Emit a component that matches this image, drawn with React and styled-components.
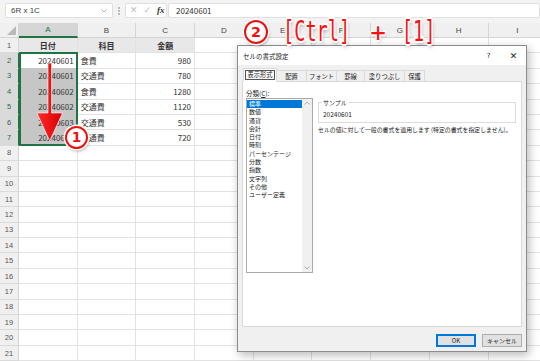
import React from 'react';
import styled, { createGlobalStyle, css } from 'styled-components';

const GREEN = '#217346';
const JP = '"Noto Sans CJK JP", "Noto Sans", sans-serif';

const GlobalStyle = createGlobalStyle`
  html, body {
    margin: 0;
    padding: 0;
    background: #fff;
  }
  body {
    font-family: ${JP};
  }
`;

const Screen = styled.div`
  position: relative;
  width: 540px;
  height: 361px;
  overflow: hidden;
  background: #fff;
`;

/* ---------- formula bar ---------- */

const FormulaBar = styled.div`
  height: 23px;
  box-sizing: border-box;
  padding: 3px 0 0 5px;
  background: #f3f3f3;
  display: flex;
  align-items: flex-start;
  font-size: 8px;
  color: #333;
`;

const Field = styled.div`
  height: 15px;
  box-sizing: border-box;
  background: #fff;
  border: 1px solid #e0e0e0;
  border-radius: 2px;
  display: flex;
  align-items: center;
  width: ${(p) => p.$w || 'auto'};
  flex: ${(p) => (p.$grow ? 1 : 'none')};
  padding: 0 ${(p) => p.$pad || 4}px;
  gap: ${(p) => p.$gap || 0}px;
  margin-left: ${(p) => p.$ml || 0}px;
`;

const NameText = styled.span`
  flex: 1;
  font-family: "Liberation Sans", sans-serif;
  font-size: 8px;
  color: #444;
`;

const Grip = styled.span`
  width: 12px;
  height: 15px;
  display: flex;
  align-items: center;
  justify-content: center;
`;

const FxItem = styled.span`
  color: ${(p) => (p.$dim ? '#bdbdbd' : '#333')};
  font-family: ${(p) => (p.$serif ? '"Liberation Serif", serif' : '"DejaVu Sans", sans-serif')};
  font-style: ${(p) => (p.$serif ? 'italic' : 'normal')};
  font-weight: ${(p) => (p.$serif ? 'bold' : 'normal')};
  font-size: 9px;
  line-height: 13px;
`;

const FormulaText = styled.span`
  font-family: ${JP};
  font-size: 8px;
  color: #333;
  padding-left: 3px;
`;

/* ---------- worksheet ---------- */

const Sheet = styled.div`
  display: grid;
  grid-template-columns: 19px repeat(9, 58.7px);
  grid-template-rows: 15px;
  grid-auto-rows: 15.4px;
  font-size: 8px;
  color: #333;
`;

const Corner = styled.div`
  position: relative;
  background: #f0f0f0;
  border-right: 1px solid #d4d4d4;
  border-bottom: 1px solid #d4d4d4;
  box-sizing: border-box;
  &::after {
    content: '';
    position: absolute;
    right: 2px;
    bottom: 2px;
    border-left: 9px solid transparent;
    border-bottom: 9px solid #b9b9b9;
  }
`;

const ColHead = styled.div`
  box-sizing: border-box;
  background: ${(p) => (p.$active ? '#d6d6d6' : '#f0f0f0')};
  color: ${(p) => (p.$active ? GREEN : '#444')};
  border-right: 1px solid #d4d4d4;
  border-bottom: ${(p) => (p.$active ? `2px solid ${GREEN}` : '1px solid #d4d4d4')};
  display: flex;
  align-items: center;
  justify-content: center;
  font-family: "Liberation Sans", sans-serif;
  font-size: 8px;
`;

const RowHead = styled.div`
  box-sizing: border-box;
  background: ${(p) => (p.$active ? '#dadada' : '#f0f0f0')};
  color: ${(p) => (p.$active ? '#2d6b47' : '#555')};
  border-right: ${(p) => (p.$active ? `1px solid ${GREEN}` : '1px solid #d4d4d4')};
  border-bottom: 1px solid #dadada;
  display: flex;
  align-items: center;
  justify-content: center;
  font-family: "Liberation Sans", sans-serif;
  font-size: 7.5px;
`;

const frameEdges = {
  top: css`border-top: 2px solid ${GREEN};`,
  mid: css``,
  bottom: css`border-bottom: 2px solid ${GREEN};`,
};

const SHADE = '#c6c6c6';

const Cell = styled.div`
  position: relative;
  box-sizing: border-box;
  border-right: 1px solid #e2e2e2;
  border-bottom: 1px solid ${(p) => (p.$shade || p.$frame === 'top' ? SHADE : '#e2e2e2')};
  background: ${(p) => (p.$head ? '#e8e8e8' : p.$shade ? SHADE : '#fff')};
  display: flex;
  align-items: center;
  justify-content: ${(p) =>
    p.$align === 'right' ? 'flex-end' : p.$align === 'center' ? 'center' : 'flex-start'};
  padding: 0 3px;
  font-weight: ${(p) => (p.$head ? 'bold' : 'normal')};
  font-size: 8px;
  color: #333;
  white-space: nowrap;
  ${(p) =>
    p.$frame &&
    css`
      &::after {
        content: '';
        position: absolute;
        left: 0;
        top: ${p.$frame === 'top' ? -1 : 0}px;
        right: -1px;
        bottom: -1px;
        border-left: 2px solid ${GREEN};
        border-right: 2px solid ${GREEN};
        ${frameEdges[p.$frame]}
      }
    `}
`;

/* ---------- dialog ---------- */

const Dialog = styled.div`
  position: absolute;
  left: 237px;
  top: 45px;
  width: 290px;
  height: 307px;
  box-sizing: border-box;
  background: #f0f0f0;
  border: 1px solid #8c8c8c;
  box-shadow: 2px 3px 9px rgba(0, 0, 0, 0.28);
  display: flex;
  flex-direction: column;
  font-family: ${JP};
  color: #222;
`;

const TitleBar = styled.div`
  height: 19px;
  background: #fff;
  display: flex;
  align-items: center;
  padding-left: 5px;
  font-size: 6.5px;
`;

const Title = styled.span`
  flex: 1;
`;

const TitleBtn = styled.span`
  width: 25px;
  text-align: center;
  font-family: "DejaVu Sans", sans-serif;
  font-size: ${(p) => p.$size || 8}px;
  color: #222;
`;

const Body = styled.div`
  flex: 1;
  display: flex;
  flex-direction: column;
  padding: 3px 4px 0 4px;
`;

const Tabs = styled.div`
  display: flex;
  align-items: flex-end;
  height: 13px;
  padding-left: 1px;
`;

const Tab = styled.div`
  height: ${(p) => (p.$on ? 14 : 12)}px;
  box-sizing: border-box;
  width: ${(p) => p.$w}px;
  margin-bottom: -1px;
  background: ${(p) => (p.$on ? '#fff' : '#f0f0f0')};
  border: 1px solid #d9d9d9;
  border-bottom: ${(p) => (p.$on ? '1px solid #fff' : '1px solid #d9d9d9')};
  border-left-width: ${(p) => (p.$first ? 1 : 0)}px;
  display: flex;
  align-items: center;
  justify-content: center;
  font-size: 6.3px;
  position: relative;
  z-index: ${(p) => (p.$on ? 2 : 1)};
`;

const FocusLabel = styled.span`
  outline: 1px solid #555;
  outline-offset: 0;
  padding: 0 1px;
  line-height: 8px;
`;

const Panel = styled.div`
  height: 246px;
  box-sizing: border-box;
  background: #fff;
  border: 1px solid #d9d9d9;
  display: flex;
  gap: 5px;
  padding: 0 4px 0 3px;
`;

const LeftCol = styled.div`
  width: 67px;
  padding-top: 6px;
`;

const Label = styled.div`
  font-size: 6.5px;
  line-height: 10px;
`;

const ListBox = styled.div`
  height: 175px;
  box-sizing: border-box;
  border: 1px solid #a9a9a9;
  display: flex;
`;

const ListItems = styled.div`
  flex: 1;
  padding-top: 1px;
`;

const Item = styled.div`
  font-size: 6px;
  line-height: 8.3px;
  padding-left: 2px;
  background: ${(p) => (p.$on ? '#0078d7' : 'transparent')};
  color: ${(p) => (p.$on ? '#fff' : '#222')};
  white-space: nowrap;
`;

const ScrollBar = styled.div`
  width: 10px;
  background: #f0f0f0;
  display: flex;
  flex-direction: column;
  justify-content: space-between;
  align-items: center;
  padding: 2px 0;
`;

const RightCol = styled.div`
  flex: 1;
  padding-top: 17px;
  padding-right: 1px;
`;

const Group = styled.fieldset`
  margin: 0;
  padding: 0 4px 3px;
  border: 1px solid #dcdcdc;
  height: 24px;
  box-sizing: border-box;
  font-size: 6.5px;
`;

const Legend = styled.legend`
  padding: 0 1px;
  margin-left: -1px;
  font-size: 6px;
  line-height: 7px;
`;

const SampleValue = styled.div`
  line-height: 10px;
  padding-top: 3px;
`;

const Desc = styled.div`
  margin-top: 3px;
  font-size: 5.9px;
  line-height: 8px;
  white-space: nowrap;
`;

const Footer = styled.div`
  flex: 1;
  display: flex;
  justify-content: flex-end;
  align-items: flex-start;
  gap: 6px;
  padding-top: 7px;
`;

const Button = styled.div`
  width: 40px;
  height: 13px;
  box-sizing: border-box;
  background: #e1e1e1;
  border: 1px solid ${(p) => (p.$primary ? '#0078d7' : '#adadad')};
  box-shadow: ${(p) => (p.$primary ? 'inset 0 0 0 1px #0078d7' : 'none')};
  display: flex;
  align-items: center;
  justify-content: center;
  font-size: 6px;
  color: #222;
`;

/* ---------- red annotations ---------- */

const outline = `
  text-shadow:
    1.5px 0 0 #fff, -1.5px 0 0 #fff, 0 1.5px 0 #fff, 0 -1.5px 0 #fff,
    1px 1px 0 #fff, -1px -1px 0 #fff, 1px -1px 0 #fff, -1px 1px 0 #fff,
    1px 2px 3px rgba(0, 0, 0, 0.35);
`;

const Keys = styled.div`
  position: absolute;
  left: 244px;
  top: 19px;
  height: 26px;
  display: flex;
  align-items: center;
  z-index: 5;
`;

const Circled = styled.span`
  width: ${(p) => p.$size}px;
  height: ${(p) => p.$size}px;
  box-sizing: border-box;
  border-radius: 50%;
  border: 2.5px solid #ee1111;
  background: #fff;
  box-shadow: 0 0 0 1.5px #fff, 1px 2px 3px rgba(0, 0, 0, 0.35);
  display: flex;
  align-items: center;
  justify-content: center;
  font-family: "DejaVu Sans", sans-serif;
  font-weight: bold;
  font-size: ${(p) => p.$size * 0.6}px;
  color: #ee1111;
  line-height: 1;
`;

const KeyText = styled.span`
  display: inline-block;
  margin-left: ${(p) => p.$ml}px;
  font-family: "DejaVu Sans Mono", monospace;
  font-size: ${(p) => p.$size || 18.6}px;
  color: #ff1010;
  line-height: 1;
  transform: scaleY(${(p) => p.$sy || 1.5});
  ${outline}
`;

const StepOne = styled.div`
  position: absolute;
  left: 65px;
  top: 126px;
  z-index: 5;
`;

const Arrow = styled.svg`
  position: absolute;
  left: 34px;
  top: 60px;
  z-index: 4;
  overflow: visible;
`;

const COLS = ['A', 'B', 'C', 'D', 'E', 'F', 'G', 'H', 'I'];

const DATA = [
  ['20240601', '食費', '980'],
  ['20240601', '交通費', '780'],
  ['20240602', '食費', '1280'],
  ['20240602', '交通費', '1120'],
  ['20240603', '交通費', '530'],
  ['20240603', '交通費', '720'],
];

const TABS = [
  ['表示形式', 34],
  ['配置', 30],
  ['フォント', 30],
  ['罫線', 28],
  ['塗りつぶし', 40],
  ['保護', 20],
];

const CATEGORIES = [
  '標準', '数値', '通貨', '会計', '日付', '時刻', 'パーセンテージ',
  '分数', '指数', '文字列', 'その他', 'ユーザー定義',
];

const Chevron = ({ up }) => (
  <svg width="6" height="4" viewBox="0 0 6 4">
    <path d={up ? 'M0.5 3.5 L3 1 L5.5 3.5' : 'M0.5 0.5 L3 3 L5.5 0.5'} fill="none" stroke="#a0a0a0" strokeWidth="0.8" />
  </svg>
);

function renderRow(r) {
  const cells = [];
  for (let c = 0; c < COLS.length; c++) {
    let text = '';
    let align = 'left';
    let head = false;
    let shade = false;
    let frame = null;
    if (r === 1 && c < 3) {
      text = ['日付', '科目', '金額'][c];
      align = 'center';
      head = true;
    } else if (r >= 2 && r <= 7 && c < 3) {
      text = DATA[r - 2][c];
      align = c === 1 ? 'left' : 'right';
    }
    if (c === 0 && r >= 2 && r <= 7) {
      shade = r > 2;
      frame = r === 2 ? 'top' : r === 7 ? 'bottom' : 'mid';
    }
    cells.push(
      <Cell key={c} $align={align} $head={head} $shade={shade} $frame={frame}>
        {text}
      </Cell>
    );
  }
  return cells;
}

export default function App() {
  const rows = Array.from({ length: 21 }, (_, i) => i + 1);
  return (
    <>
      <GlobalStyle />
      <Screen>
        <FormulaBar>
          <Field $w="108px" $pad={5}>
            <NameText>6R x 1C</NameText>
            <Chevron />
          </Field>
          <Grip>
            <svg width="2" height="8" viewBox="0 0 2 8">
              <circle cx="1" cy="1" r="0.8" fill="#777" />
              <circle cx="1" cy="4" r="0.8" fill="#777" />
              <circle cx="1" cy="7" r="0.8" fill="#777" />
            </svg>
          </Grip>
          <Field $w="42px" $pad={4} $gap={6}>
            <FxItem $dim>✕</FxItem>
            <FxItem $dim>✓</FxItem>
            <FxItem $serif>fx</FxItem>
          </Field>
          <Field $grow $pad={4} $ml={1}>
            <FormulaText>20240601</FormulaText>
          </Field>
        </FormulaBar>

        <Sheet>
          <Corner />
          {COLS.map((c) => (
            <ColHead key={c} $active={c === 'A'}>{c}</ColHead>
          ))}
          {rows.map((r) => (
            <React.Fragment key={r}>
              <RowHead $active={r >= 2 && r <= 7}>{r}</RowHead>
              {renderRow(r)}
            </React.Fragment>
          ))}
        </Sheet>

        <Arrow width="32" height="85" viewBox="0 0 32 85">
          <defs>
            <linearGradient id="arrowFill" x1="0" x2="1" y1="0" y2="0">
              <stop offset="0" stopColor="#ff2a2a" />
              <stop offset="1" stopColor="#d80000" />
            </linearGradient>
          </defs>
          <path
            d="M14 3 L17.5 3 L17.5 53 L28.5 53 L15.7 81 L3 53 L14 53 Z"
            fill="url(#arrowFill)"
            stroke="#fff"
            strokeWidth="0.6"
          />
        </Arrow>

        <StepOne>
          <Circled $size={23}>1</Circled>
        </StepOne>

        <Dialog>
          <TitleBar>
            <Title>セルの書式設定</Title>
            <TitleBtn $size={7}>?</TitleBtn>
            <TitleBtn $size={9}>✕</TitleBtn>
          </TitleBar>
          <Body>
            <Tabs>
              {TABS.map(([t, w], i) => (
                <Tab key={t} $w={w} $on={i === 0} $first={i === 0}>
                  {i === 0 ? <FocusLabel>{t}</FocusLabel> : t}
                </Tab>
              ))}
            </Tabs>
            <Panel>
              <LeftCol>
                <Label>分類(<u>C</u>):</Label>
                <ListBox>
                  <ListItems>
                    {CATEGORIES.map((c, i) => (
                      <Item key={c} $on={i === 0}>{c}</Item>
                    ))}
                  </ListItems>
                  <ScrollBar>
                    <Chevron up />
                    <Chevron />
                  </ScrollBar>
                </ListBox>
              </LeftCol>
              <RightCol>
                <Group>
                  <Legend>サンプル</Legend>
                  <SampleValue>20240601</SampleValue>
                </Group>
                <Desc>セルの値に対して一般の書式を適用します (特定の書式を指定しません)。</Desc>
              </RightCol>
            </Panel>
            <Footer>
              <Button $primary>OK</Button>
              <Button>キャンセル</Button>
            </Footer>
          </Body>
        </Dialog>

        <Keys>
          <Circled $size={24}>2</Circled>
          <KeyText $ml={15}>[Ctrl]</KeyText>
          <KeyText $ml={20} $size={26} $sy={1}>+</KeyText>
          <KeyText $ml={16}>[1]</KeyText>
        </Keys>
      </Screen>
    </>
  );
}
